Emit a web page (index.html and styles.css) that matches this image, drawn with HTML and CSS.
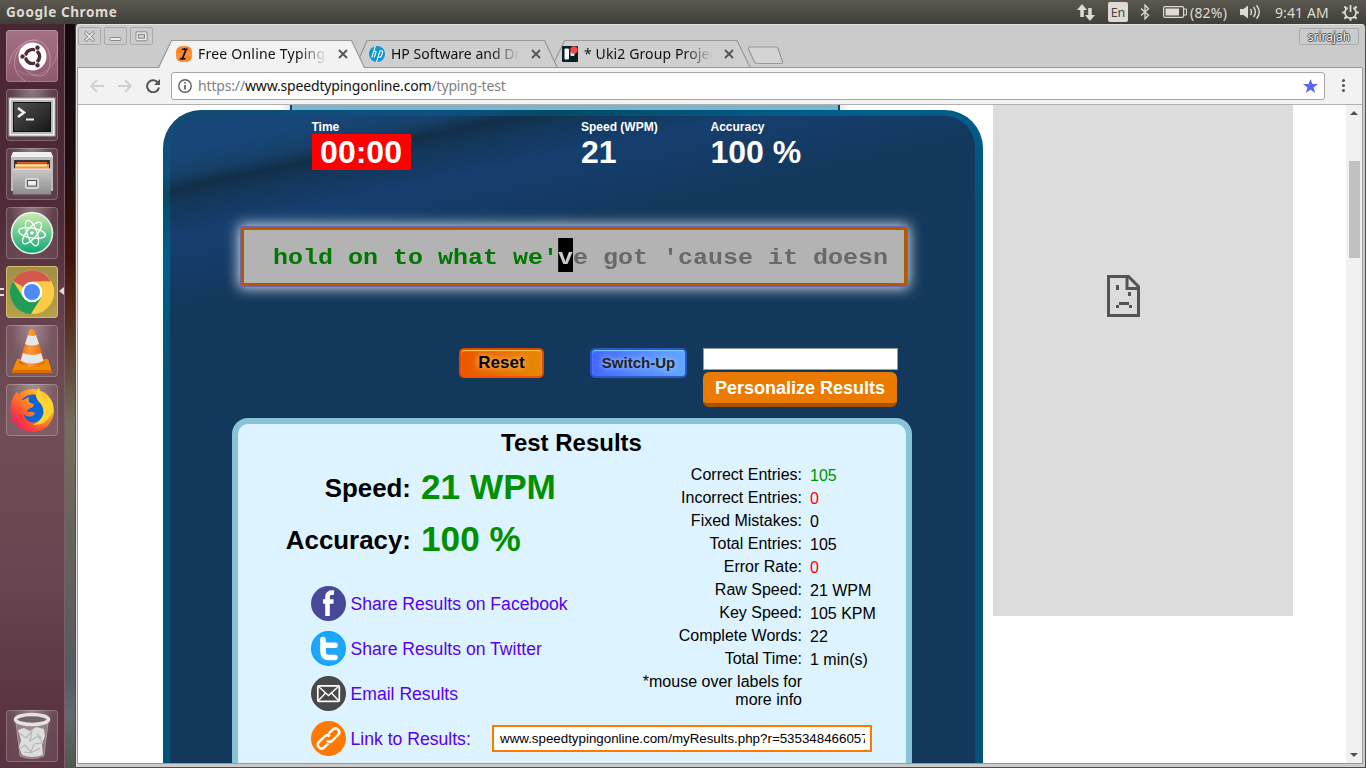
FILE: index.html
```html
<!DOCTYPE html>
<html lang="en">
<head>
<meta charset="utf-8">
<title>Free Online Typing Test</title>
<link rel="stylesheet" href="styles.css">
</head>
<body>
<div class="desktop">
  <header class="topbar">
    <span class="app-name">Google Chrome</span>
    <div class="indicators">
      <svg class="ind-net" width="18" height="17" viewBox="0 0 18 17"><g fill="#dfdbd2"><path d="M5 0 10 6H6.800V13H3.300V6H0z"/><path d="M13 17 18 11H14.700V4H11.200V11H8z"/></g></svg>
      <span class="lang">En</span>
      <svg class="ind-bt" width="10" height="16" viewBox="0 0 10 16"><path d="M1 4.500 8.500 11.300 5 15V1L8.500 4.700 1 11.500" fill="none" stroke="#dfdbd2" stroke-width="1.300"/></svg>
      <svg class="ind-bat" width="24" height="12" viewBox="0 0 24 12"><rect x=".6" y=".6" width="20" height="10.800" rx="1.500" fill="none" stroke="#dfdbd2" stroke-width="1.200"/><rect x="2.500" y="2.500" width="13.500" height="7" fill="#dfdbd2"/><path d="M21 3h2.500v6H21" fill="none" stroke="#dfdbd2"/></svg>
      <span class="pct">(82%)</span>
      <svg class="ind-vol" width="21" height="16" viewBox="0 0 21 16"><path d="M0 5h3.500L8 1.500v13L3.500 11H0z" fill="#dfdbd2"/><path d="M10.500 5q2 3 0 6M13.500 3q3.800 5 0 10M16.500 1.200q5.600 6.800 0 13.600" fill="none" stroke="#dfdbd2" stroke-width="1.400"/></svg>
      <span class="clock">9:41 AM</span>
      <svg class="ind-gear" width="17" height="17" viewBox="0 0 17 17"><g fill="none" stroke="#dfdbd2"><path d="M5.600 3.800a5.600 5.600 0 1 0 5.800 0" stroke-width="1.800"/><path d="M8.500 1v7" stroke-width="1.800"/><path d="M4.500 4.500 2.400 2.400M12.500 4.500l2.100-2.100M2.800 8.500H.2M14.200 8.500h2.600M4.500 12.800l-2.100 2M12.500 12.800l2.100 2M8.500 14v2.800" stroke-width="2.100"/></g></svg>
    </div>
  </header>

  <div class="workspace">
    <nav class="launcher">
      <div class="tile tile-dash"><svg width="52" height="52" viewBox="0 0 52 52"><g fill="none" stroke="#d8acbb" stroke-opacity=".6"><path d="M3 34C10 5 42 2 44 28S21 49 14 31"/><path d="M19 51C-1 39 10 8 31 10"/><path d="M51 14C55 38 29 54 12 40" stroke-opacity=".35"/></g><circle cx="26.500" cy="26.500" r="14" fill="#fff"/><circle cx="26.500" cy="26.500" r="7" fill="none" stroke="#4c2c37" stroke-width="3.600"/><g stroke="#fff" stroke-width="1.500"><path d="M26.500 26.500H14M26.500 26.500l6 10M26.500 26.500l6-10"/></g><circle cx="26.500" cy="26.500" r="5" fill="#fff"/><g fill="#4c2c37" stroke="#fff" stroke-width=".8"><circle cx="16.500" cy="26.500" r="2.600"/><circle cx="31.500" cy="17.700" r="2.600"/><circle cx="31.500" cy="35.300" r="2.600"/></g></svg></div>
      <div class="tile"><svg width="52" height="52" viewBox="0 0 52 52"><defs><linearGradient id="term" x2="1" y2="1"><stop stop-color="#505050"/><stop offset="1" stop-color="#171717"/></linearGradient></defs><rect x="3" y="9" width="46" height="38" fill="#f1f1f1" stroke="#a7a7a7"/><rect x="5" y="11" width="42" height="34" fill="#b9b9b9"/><rect x="7.500" y="13.500" width="37" height="29" fill="url(#term)" stroke="#111"/><path d="m12 19 6 4.500-6 4.500" fill="none" stroke="#eee" stroke-width="2.600"/><path d="M20 30.500h8" stroke="#eee" stroke-width="2"/></svg></div>
      <div class="tile"><svg width="52" height="52" viewBox="0 0 52 52"><defs><linearGradient id="cab" x2="0" y2="1"><stop stop-color="#c9c9c9"/><stop offset="1" stop-color="#8d8d8d"/></linearGradient></defs><path d="M7 4h38l2 5v34H5V9z" fill="#bdbdbd"/><path d="M7 4h38l2 5H5z" fill="#f0f0f0"/><rect x="8" y="12" width="36" height="9" fill="#333"/><path d="M11 14h30v9H11z" fill="#cd5b22"/><path d="M9 16h34v6H9z" fill="#f09a4a"/><path d="M10 17.500h31" stroke="#fff1df" stroke-width="1.500"/><path d="M7 21h38v25.500H7z" fill="url(#cab)"/><path d="M7 21h38" stroke="#e9e9e9"/><rect x="19.500" y="30.500" width="13" height="10" rx="1.500" fill="#c9c9c9" stroke="#ddd"/><rect x="21.500" y="32.500" width="9" height="5.500" fill="#eee" stroke="#555"/></svg></div>
      <div class="tile"><svg width="52" height="52" viewBox="0 0 52 52"><defs><linearGradient id="atom" x2="0" y2="1"><stop stop-color="#d2ebb0"/><stop offset="1" stop-color="#08a972"/></linearGradient></defs><circle cx="26" cy="26" r="20.500" fill="url(#atom)" stroke="#e9f5ea" stroke-width="1.600"/><g fill="none" stroke="#fff" stroke-width="1.300"><ellipse cx="26" cy="26" rx="13.500" ry="5" transform="rotate(10 26 26)"/><ellipse cx="26" cy="26" rx="13.500" ry="5" transform="rotate(70 26 26)"/><ellipse cx="26" cy="26" rx="13.500" ry="5" transform="rotate(130 26 26)"/></g><circle cx="26" cy="26" r="1.800" fill="#fff"/></svg></div>
      <div class="tile tile-active"><svg width="52" height="52" viewBox="0 0 52 52"><circle cx="26" cy="26" r="22" fill="#fdc943"/><path d="M26 26 6.900 15A22 22 0 0 1 45 15.500H26z" fill="#d4584c"/><path d="M6.900 15A22 22 0 0 0 25 48l10.500-16.500L26 35.500 17 31z" fill="#1f9c58"/><path d="m25 48 10.500-16.500L37 20l-3-4.500H45.300A22 22 0 0 1 25 48z" fill="#fecb45"/><circle cx="26" cy="26" r="10.300" fill="#fff"/><circle cx="26" cy="26" r="8" fill="#4c8bf5"/></svg><span class="pips"></span><span class="focus-arrow"></span></div>
      <div class="tile"><svg width="52" height="52" viewBox="0 0 52 52"><defs><linearGradient id="cone"><stop stop-color="#d85b00"/><stop offset=".4" stop-color="#ff9b3a"/><stop offset="1" stop-color="#e36400"/></linearGradient></defs><path d="M11 34h31l4 13H6z" fill="#f58a00"/><path d="M6 45h40v3H6z" fill="#d96b00"/><path d="M23.500 5q2.500-1.500 5 0L39 38q-13 8-26 0z" fill="url(#cone)"/><path d="M22 10q4 2 8 0l3 9q-7 3-14 0zM17 28q9 4 18 0l2.500 8q-11 5-23 0z" fill="#e5e8e9"/></svg></div>
      <div class="tile"><svg width="52" height="52" viewBox="0 0 52 52"><defs><linearGradient id="fox" x1="1" y1="0" x2="0" y2="1"><stop stop-color="#fff14c"/><stop offset=".35" stop-color="#ff9a1f"/><stop offset=".7" stop-color="#ff3d3e"/><stop offset="1" stop-color="#d6138a"/></linearGradient></defs><circle cx="26.500" cy="26.500" r="21.500" fill="url(#fox)"/><circle cx="27" cy="25" r="14.500" fill="#0c65d5"/><path d="M12 7Q5 13 4.500 23L6 38l11 8h12l11-7-4-4q-5 4-10 3.500-6-1-8.500-8 4 3 9 1.500 2-1 2.500-3-3-2-8-1 0-3 6-5l1-3q-3-.5-5-2-1-3 0-5l-6 3q-5-1-5.500-9z" fill="url(#fox)"/><path d="M33 3q-7 9 2 17 6 9-2 17l-6 4q13 1 20-13V20l-5-7-1 3Q34 12 33 3z" fill="#ffd42f"/></svg></div>
      <div class="tile tile-trash"><svg width="52" height="52" viewBox="0 0 52 52"><path d="M10 12h32l-4 34q-12 5-24 0z" fill="#d9d9d9" fill-opacity=".3" stroke="#ccc" stroke-opacity=".5"/><path d="m12 20 6-2 6 3 6-4 8 2 1 7-3 8 1 11q-11 4-21 0l-3-8 2-7z" fill="#dcdedb"/><path d="m13 23 7 5 6-7-2 10 8-5 5 7-9 1-3 8-6-7-6 4m18-15 4 4M18 42l7 1 9-5" fill="none" stroke="#b5b9b5" stroke-width="1.200"/><ellipse cx="26" cy="9.500" rx="16.500" ry="5" fill="#75636a" stroke="#e3e3df" stroke-width="3.500"/></svg></div>
    </nav>
    <div class="wallpaper"></div>

    <main class="window">
      <div class="titlebar">
        <svg class="tab-shapes" width="1286" height="30" viewBox="0 0 1286 30"><g stroke="#999" stroke-width="1.200"><path d="M474.500 29 487.500 1.500H660L673.500 29" fill="#cfcfcf"/><path d="M278 29 290 1.500H467.500L480.500 29" fill="#cfcfcf"/><path d="M0 28.500H81.500L94.500 1.500H274.500L287.500 28.500H1285" fill="none"/><path d="M82 29.500 95 2H274L287 29.500z" fill="#f2f2f2" stroke="none"/><path d="M673 8h25.500q2 0 2.500 1.500l4.500 13q.8 2-1.500 2h-24q-2 0-2.800-2L671.500 10q-.6-2 1.500-2z" fill="#d4d4d4"/></g></svg>
        <div class="win-buttons">
          <span class="wbtn"><svg width="13" height="11" viewBox="0 0 13 11"><path d="m2 1 9 9m0-9-9 9" stroke="#888" stroke-width="3.200"/><path d="m2.500 1.500 8 8m0-8-8 8" stroke="#eee" stroke-width="1.700"/></svg></span>
          <span class="wbtn"><svg width="13" height="11" viewBox="0 0 13 11"><rect x="1" y="6.500" width="11" height="3" rx="1" fill="#eee" stroke="#888"/></svg></span>
          <span class="wbtn"><svg width="13" height="11" viewBox="0 0 13 11"><rect x="1" y=".8" width="11" height="9" rx="1" fill="#eee" stroke="#888"/><rect x="3.500" y="3.300" width="6" height="4" fill="#ccc" stroke="#888"/></svg></span>
        </div>
        <div class="tabs">
          <div class="tab">
            <svg width="16" height="16" viewBox="0 0 16 16"><rect width="16" height="16" rx="6" fill="#ff8426"/><path d="M0 7 8 8 5 0h5L8 8l8-3v6L8 8l3 8H5l3-8-8 5z" fill="#ffa34d" opacity=".5"/><path d="M6 3q2 .8 2.500 0 1 .8 3 0M10 3.500 6.500 12.500M4 13q2-.8 2.500 0 1-.8 3 0" fill="none" stroke="#111" stroke-width="1.800"/></svg>
            <span class="tab-title t1">Free Online Typing</span>
            <svg class="x" width="10" height="10" viewBox="0 0 10 10"><path d="m1 1 8 8m0-8-8 8"/></svg>
          </div>
          <div class="tab">
            <svg width="16" height="16" viewBox="0 0 16 16"><circle cx="8" cy="8" r="8" fill="#0b96d8"/><path d="M6.300 0 2.800 11.500M4.500 6q3-1.700 2.400.5L5.200 11.500M7.500 16l3.400-11q3.400-.7 2.600 1.500l-1 3.300q-.7 1.900-3.200 1.400" fill="none" stroke="#fff" stroke-width="1.100"/></svg>
            <span class="tab-title t2">HP Software and Dr</span>
            <svg class="x" width="10" height="10" viewBox="0 0 10 10"><path d="m1 1 8 8m0-8-8 8"/></svg>
          </div>
          <div class="tab">
            <svg width="16" height="16" viewBox="0 0 16 16"><rect width="16" height="16" rx="1" fill="#0a2029"/><rect x="2.500" y="2.500" width="4.500" height="11" rx="1" fill="#fff"/><rect x="8.500" y="5" width="4" height="5" rx="1" fill="#d8eee5"/><circle cx="12" cy="4" r="3.700" fill="#ff4640"/></svg>
            <span class="tab-title t3">* Uki2 Group Projec</span>
            <svg class="x" width="10" height="10" viewBox="0 0 10 10"><path d="m1 1 8 8m0-8-8 8"/></svg>
          </div>
        </div>
        <span class="user">srirajah</span>
      </div>

      <div class="client">
        <div class="toolbar">
          <svg class="nav" width="14" height="14" viewBox="0 0 14 14"><path d="M14 7H1.500M7 1 1 7l6 6" fill="none" stroke="#d0d0d0" stroke-width="1.900"/></svg>
          <svg class="nav" width="14" height="14" viewBox="0 0 14 14"><path d="M0 7h12.500M7 1l6 6-6 6" fill="none" stroke="#d0d0d0" stroke-width="1.900"/></svg>
          <svg class="nav" width="14" height="14" viewBox="0 0 14 14"><path d="M12 3.800A6 6 0 1 0 13 8.500" fill="none" stroke="#555" stroke-width="2"/><path d="M14 0v6H8z" fill="#555"/></svg>
          <div class="omnibox">
            <svg width="14" height="14" viewBox="0 0 14 14"><circle cx="7" cy="7" r="6.200" fill="none" stroke="#5c5c5c" stroke-width="1.400"/><path d="M7 6v4.500M7 3.200v1.600" stroke="#5c5c5c" stroke-width="1.700"/></svg>
            <span class="url"><span>https://</span><b>www.speedtypingonline.com</b><span>/typing-test</span></span>
            <svg class="star" width="15" height="14" viewBox="0 0 15 14"><path d="m7.500 0 1.900 5H15l-4.500 3.400 1.700 5.600-4.700-3.300L2.800 14l1.700-5.600L0 5h5.600z" fill="#5a64f8"/></svg>
          </div>
          <span class="dots"><i></i><i></i><i></i></span>
        </div>

        <div class="page">
          <div class="content">
            <div class="upper-strip"></div>
            <section class="trainer">
              <div class="metrics">
                <div><small>Time</small><strong class="timer">00:00</strong></div>
                <div><small>Speed (WPM)</small><strong>21</strong></div>
                <div><small>Accuracy</small><strong>100 %</strong></div>
              </div>
              <div class="typing"><div class="line"><span class="done">hold on to what we'</span><span class="caret">v</span><span class="todo">e got 'cause it doesn</span></div></div>
              <div class="controls">
                <span class="btn reset">Reset</span>
                <span class="btn switch">Switch-Up</span>
                <div class="personal"><div class="name-input"></div><span class="pbtn">Personalize Results</span></div>
              </div>
              <div class="results">
                <h2>Test Results</h2>
                <div class="results-body">
                  <div class="left">
                    <dl class="scores"><dt>Speed:</dt><dd>21 WPM</dd><dt>Accuracy:</dt><dd>100 %</dd></dl>
                    <div class="share">
                      <a><svg width="35" height="35" viewBox="0 0 35 35"><circle cx="17.500" cy="17.500" r="17.500" fill="#48489b"/><path d="M23 6.800q-6.500-1-6.500 4.200V30M12 15.500h10.500" fill="none" stroke="#fff" stroke-width="4.600"/></svg>Share Results on Facebook</a>
                      <a><svg width="35" height="35" viewBox="0 0 35 35"><circle cx="17.500" cy="17.500" r="16.800" fill="#21a5fb" stroke="#00a8ff" stroke-width="1.400"/><path d="M12 8.500v12q0 6 6 6h6M12.500 14.200h11.500" fill="none" stroke="#fff" stroke-width="5.600" stroke-linecap="round"/></svg>Share Results on Twitter</a>
                      <a><svg width="35" height="35" viewBox="0 0 35 35"><circle cx="17.500" cy="17.500" r="17.500" fill="#494949"/><g fill="none" stroke="#fff" stroke-width="1.700"><rect x="6.800" y="9.800" width="21.500" height="15.500" rx="1"/><path d="m7.500 10.500 10 9 10-9M7.500 24.500l7-7.500M27.500 24.500l-7-7.500" stroke-width="1.400"/></g></svg>Email Results</a>
                      <a><svg width="35" height="35" viewBox="0 0 35 35"><circle cx="17.500" cy="17.500" r="17.500" fill="#ff7800"/><g transform="rotate(-45 17.500 17.500)" fill="none" stroke="#fff" stroke-width="2.500"><path d="M14 20.800H8.500q-4 0-4-3.800t4-3.800H16q4 0 4 3.800"/><path d="M21 14.200h5.500q4 0 4 3.800t-4 3.800H19q-4 0-4-3.800"/></g></svg>Link to Results:</a>
                    </div>
                  </div>
                  <dl class="stats">
                    <dt>Correct Entries:</dt><dd class="good">105</dd>
                    <dt>Incorrect Entries:</dt><dd class="bad">0</dd>
                    <dt>Fixed Mistakes:</dt><dd>0</dd>
                    <dt>Total Entries:</dt><dd>105</dd>
                    <dt>Error Rate:</dt><dd class="bad">0</dd>
                    <dt>Raw Speed:</dt><dd>21 WPM</dd>
                    <dt>Key Speed:</dt><dd>105 KPM</dd>
                    <dt>Complete Words:</dt><dd>22</dd>
                    <dt>Total Time:</dt><dd>1 min(s)</dd>
                    <dt class="note">*mouse over labels for more info</dt>
                  </dl>
                  <div class="link-box"><span>www.speedtypingonline.com/myResults.php?r=535348466057</span></div>
                </div>
              </div>
            </section>
          </div>
          <aside class="ad"><svg width="34" height="42" viewBox="0 0 34 42"><path d="M1.500 1.500h20l10 10v29h-30z" fill="none" stroke="#545454" stroke-width="3"/><path d="M20 1v12.500h12" fill="none" stroke="#545454" stroke-width="3"/><path d="M9 10h3v5H9zM21 17h3v4h-3zM12 27h10v3H12zM9 30h3v3H9zM22 30h3v3h-3z" fill="#545454"/></svg></aside>
          <div class="scrollbar"><i class="up"></i><i class="thumb"></i><i class="down"></i></div>
        </div>
      </div>
    </main>
  </div>
</div>
</body>
</html>
```
FILE: styles.css
```css
* { box-sizing: border-box; }
body { margin: 0; overflow: hidden; font-family: "Liberation Sans", Arial, sans-serif; }
svg { display: block; flex: none; }
dl, dd, h2 { margin: 0; }

.desktop { width: 1366px; height: 768px; display: grid; grid-template-rows: 24px 744px; background: #3c3b37; }

/* system bar */
.topbar { display: flex; justify-content: space-between; align-items: center; background: linear-gradient(#5b594f, #3f3e39); color: #dfdbd2; font-family: "Noto Sans", sans-serif; }
.app-name { padding-left: 6px; font-weight: 700; font-size: 13.500px; letter-spacing: .6px; }
.indicators { display: flex; align-items: center; padding-right: 7px; font-size: 14px; }
.lang { margin-left: 13px; width: 20px; height: 20px; line-height: 21px; border-radius: 2px; background: #dfdbd2; color: #444; font-size: 12.500px; text-align: center; }
.ind-bt { margin-left: 12px; }
.ind-bat { margin-left: 13px; }
.pct { width: 39px; margin-left: 3px; letter-spacing: .2px; }
.ind-vol { margin-left: 11px; }
.clock { width: 55px; margin-left: 14px; letter-spacing: .1px; white-space: nowrap; }
.ind-gear { margin-left: 12px; }

.workspace { display: grid; grid-template-columns: 65px 10px 1291px; height: 744px; }

/* launcher */
.launcher { display: flex; flex-direction: column; gap: 7px; padding: 6px; border-right: 1px solid #7b5c68; background: linear-gradient(#472633 0, #502b39 200px, #633c49 270px, #704e55 400px, #67444f 560px, #593341 690px, #593342 100%); }
.tile { position: relative; flex: none; width: 52px; height: 52px; border-radius: 4px; background: radial-gradient(ellipse at 50% -10%, #ffffff66, #ffffff1c 60%, #ffffff14); box-shadow: inset 0 0 0 1px #ffffff38; }
.tile-dash { background: linear-gradient(#a37085, #8d5a6e); }
.tile-active { background: linear-gradient(#a08f49, #b5a04a); box-shadow: inset 0 0 0 1px #cfbe70; }
.tile-trash { margin-top: auto; }
.pips { position: absolute; left: -6px; top: 22px; width: 4px; height: 8px; border: solid #ddd; border-width: 2px 0; }
.focus-arrow { position: absolute; left: 53px; top: 21px; border: solid transparent; border-width: 4px 5px 4px 0; border-right-color: #ddd; }
.wallpaper { background: linear-gradient(#120b0c 0, #1c0e0f 130px, #42150b 235px, #563121 300px, #756e5b 400px, #68645a 500px, #565b62 650px, #636870 690px, #51584c 100%); }

/* window frame */
.window { display: grid; grid-template-rows: 44px 700px; border: solid #4c4c49; border-width: 0 1px 1px; border-radius: 4px 4px 0 0; background: #cbcbcb; box-shadow: inset 1px 1px #e2e2e2; padding: 0 2px 0 1px; height: 744px; overflow: hidden; }
.titlebar { position: relative; display: flex; }
.tab-shapes { position: absolute; left: 0; top: 15px; }
.win-buttons { position: relative; display: flex; gap: 3px; padding: 3px 0 0 1px; }
.wbtn { display: grid; place-items: center; width: 23px; height: 18px; border: 1px solid #aaa; border-radius: 2px; }
.tabs { position: relative; display: flex; margin-left: 23px; padding-top: 22px; }
.tab { display: flex; width: 193px; height: 16px; align-items: center; }
.tab-title { width: 129px; margin-left: 6px; white-space: nowrap; font: 14px/20px "Noto Sans", sans-serif; color: #111; -webkit-mask-image: linear-gradient(90deg, #000 78%, transparent); mask-image: linear-gradient(90deg, #000 78%, transparent); }
.t1 { letter-spacing: .22px; }
.t3 { letter-spacing: .12px; }
.x { margin-left: 11px; stroke: #555; stroke-width: 1.900; }
.user { position: absolute; right: 4px; top: 4px; width: 60px; height: 17px; border: 1px solid #aaa; border-radius: 2px; color: #eee; font: 12px/15px "Noto Sans", sans-serif; text-align: center; text-shadow: 0 1px #555, 1px 0 #555, -1px 0 #555, 0 -1px #555; }

.client { margin-bottom: 4px; border: solid #999; border-width: 0 1px 1px; background: #fff; overflow: hidden; }
.toolbar { height: 37px; display: flex; align-items: center; padding: 0 0 1px 12px; border-bottom: 1px solid #b0b0b0; background: #f2f2f2; }
.nav { margin-right: 14px; }
.omnibox { display: flex; align-items: center; width: 1154px; height: 28px; margin-left: -3px; padding: 0 6px; border: 1px solid #a5a5a5; border-radius: 3px; background: #fff; }
.url { margin-left: 6px; font: 14px/24px "Noto Sans", sans-serif; letter-spacing: -.16px; color: #808080; white-space: nowrap; }
.url b { font-weight: 400; color: #111; }
.star { margin-left: auto; }
.dots { display: grid; gap: 2px; margin-left: 17px; }
.dots i { width: 3px; height: 3px; border-radius: 50%; background: #555; }

/* web page */
.page { display: grid; grid-template-columns: 905px 10px 300px 53px 16px; height: 658px; }
.content { padding-left: 85px; height: 658px; overflow: hidden; }
.upper-strip { width: 550px; height: 5px; margin-left: 127px; border: solid #15406e; border-width: 0 2px; background: #76b6cf; box-shadow: 0 0 14px #000a; }
.trainer { height: 700px; border: solid transparent; border-width: 6px 8px 0 7px; border-radius: 38px 38px 0 0; background: linear-gradient(168deg, #174779 0, #174779 42px, #164069 66px, #112f48 80px, #13365a 94px, #153f6f 128px, #143c68 155px, #12385c 195px) padding-box, linear-gradient(168deg, #12496f 0, #0f5081 60px, #054966 83px, #005f8b 140px, #005b86 190px, #04527a 260px, #04527a) border-box; background-origin: border-box; position: relative; }
.metrics { display: grid; grid-template-columns: 269.500px 129.500px 130px; height: 54px; padding: 4px 0 0 141.500px; color: #fff; }
.metrics small { display: block; font: bold 12px/14px "Liberation Sans", sans-serif; }
.metrics strong { display: inline-block; font-size: 32px; line-height: 36px; white-space: nowrap; }
.metrics .timer { width: 99px; background: #f00; text-align: center; }
.typing { width: 666px; height: 59px; margin: 56.500px 0 0 70.500px; padding: 8px 0 0 29.500px; border: 3.500px solid #b35a00; background: #b3b3b3; box-shadow: 0 0 0 1px #7068ac, 0 0 13px 2px #e0e6f2; }
.line { display: flex; width: 542px; transform: scaleX(1.1362); transform-origin: 0 0; font: bold 22px/42px "Liberation Mono", monospace; white-space: pre; }
.done { color: #070; }
.todo { color: #696969; }
.caret { height: 34px; background: #000; color: #ccc; }
.controls { display: flex; margin: 62.500px 0 0 289px; height: 59px; }
.btn { height: 30px; border-radius: 5px; text-align: center; font-weight: 700; line-height: 28px; }
.reset { width: 85px; border: 2px solid #dd4700; border-bottom-color: #f05000; background: linear-gradient(90deg, #ed5600, #e68a00); box-shadow: inset 0 1px 1px #ffd04b; color: #000; font-size: 17px; line-height: 25px; text-shadow: 0 0 6px #ffe38b; }
.switch { width: 97px; margin-left: 46px; border: 2px solid #2d55c5; background: linear-gradient(90deg, #4267ff, #62a7ff); box-shadow: inset 0 1px 1px #7fd0ff; color: #222; font-size: 15px; line-height: 26px; text-shadow: 0 0 6px #bfe0ff; }
.personal { margin-left: 16px; width: 195px; }
.name-input { height: 22px; border: 1px solid #999; background: #fff; }
.pbtn { display: block; width: 194px; height: 35px; margin-top: 2px; border-bottom: 4px solid #a95300; border-radius: 6px; background: #eb7b00; color: #fff; font-weight: 700; font-size: 18px; line-height: 32px; text-align: center; white-space: nowrap; }

.results { width: 680px; height: 380px; margin: 11px 0 0 62px; border: 6px solid #88c3d8; border-radius: 16px; background: #ddf3ff; }
.results h2 { padding-right: 1px; font-size: 24px; line-height: 38px; text-align: center; }
.results-body { display: grid; grid-template-columns: 400px 268px; position: relative; }
.scores { display: grid; grid-template-columns: 173px 1fr; column-gap: 10px; grid-auto-rows: 52px; font-weight: 700; }
.scores dt { text-align: right; font-size: 25.900px; line-height: 53px; }
.scores dd { color: #009000; font-size: 35.200px; line-height: 50px; }
.share { display: grid; gap: 10px; padding: 20px 0 0 73px; }
.share a { display: flex; gap: 4.500px; height: 35px; color: #5a00ef; font-size: 17.600px; line-height: 36px; white-space: nowrap; }
.stats { display: grid; grid-template-columns: 164px 1fr; column-gap: 8px; grid-auto-rows: 23px; font-size: 16px; line-height: 18px; }
.stats dt { text-align: right; padding-top: 4px; }
.stats dd { padding-top: 5px; }
.good { color: #009000; }
.bad { color: #f00; }
.stats .note { line-height: 18px; }
.link-box { position: absolute; left: 254px; top: 263px; width: 380px; height: 27px; padding: 0 5px 0 6px; border: 2px solid #ff7800; background: #fff; font-size: 13.333px; line-height: 23px; }
.link-box span { display: block; overflow: hidden; white-space: nowrap; }

.ad { grid-column: 3; height: 511px; padding: 170px 0 0 114px; background: #dcdcdc; }
.scrollbar { grid-column: 5; display: flex; flex-direction: column; align-items: center; background: #f1f1f1; }
.up { margin-top: 6px; border: solid transparent; border-width: 0 4px 4px; border-bottom-color: #505050; }
.thumb { width: 11px; height: 97px; margin-top: 46px; background: #c1c1c1; }
.down { margin: auto 0 6px; border: solid transparent; border-width: 4px 4px 0; border-top-color: #505050; }
```
